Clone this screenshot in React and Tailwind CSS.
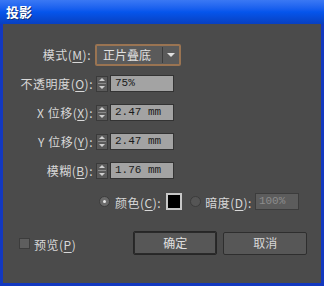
import { useState } from 'react'

const ROWS = [
  { label: '不透明度', key: 'O', value: '75%' },
  { label: 'X 位移', key: 'X', value: '2.47 mm' },
  { label: 'Y 位移', key: 'Y', value: '2.47 mm' },
  { label: '模糊', key: 'B', value: '1.76 mm' },
]

const cjk = { fontFamily: '"Noto Sans CJK SC", "Noto Sans", sans-serif' }

function Label({ text, hotkey, colon = true }) {
  return (
    <span className="whitespace-nowrap text-[12px] tracking-[0.5px] text-[#d8d8d8]" style={cjk}>
      {text}(<span className="underline underline-offset-2">{hotkey}</span>){colon ? ':' : ''}
    </span>
  )
}

function Spinner() {
  return (
    <div className="flex h-[16px] w-[12px] flex-col justify-between border border-[#3a3a3a] bg-[#5a5a5a]">
      <div className="flex h-[7px] items-center justify-center">
        <div className="h-0 w-0 border-x-[3px] border-b-[3px] border-x-transparent border-b-[#cfcfcf]" />
      </div>
      <div className="mx-[1px] h-px bg-[#8a8a8a]" />
      <div className="flex h-[7px] items-center justify-center">
        <div className="h-0 w-0 border-x-[3px] border-t-[3px] border-x-transparent border-t-[#cfcfcf]" />
      </div>
    </div>
  )
}

export default function App() {
  const [preview, setPreview] = useState(false)

  return (
    <div className="flex h-[286px] w-[324px] flex-col bg-[#1238c0]" style={cjk}>
      <div className="flex h-[24px] items-center bg-gradient-to-b from-[#3a78f4] via-[#0555ec] to-[#0840c0] pl-[6px]">
        <span className="text-[13px] font-bold text-white [text-shadow:1px_1px_0_#10307a]">投影</span>
      </div>
      <div className="mx-[3px] mb-[3px] flex flex-1 flex-col bg-[#4b4b4b] pt-[20px]">
        <div className="flex h-[22px] items-center">
          <div className="flex w-[88px] justify-end">
            <Label text="模式" hotkey="M" />
          </div>
          <div className="ml-[4px] flex h-[22px] w-[86px] items-center rounded-[2px] border-2 border-[#9a7452] bg-[#5a5a5a]">
            <span className="flex-1 pl-[6px] text-[12px] text-[#e0e0e0]">正片叠底</span>
            <div className="h-[16px] w-px bg-[#3c3c3c]" />
            <div className="flex w-[16px] justify-center">
              <div className="h-0 w-0 border-x-[4px] border-t-[4px] border-x-transparent border-t-[#e0e0e0]" />
            </div>
          </div>
        </div>

        <div className="mt-[9px] flex flex-col gap-[12px]">
          {ROWS.map((row) => (
            <div key={row.key} className="flex h-[17px] items-center">
              <div className="flex w-[90px] justify-end">
                <Label text={row.label} hotkey={row.key} />
              </div>
              <div className="ml-[3px]">
                <Spinner />
              </div>
              <div className="ml-[2px] flex h-[17px] w-[64px] items-center border border-[#333] bg-[#a3a3a3] pl-[4px] text-[11px] text-[#1a1a1a]" style={{ fontFamily: '"Liberation Mono", monospace' }}>
                {row.value}
              </div>
            </div>
          ))}
        </div>

        <div className="mt-[13px] flex h-[18px] items-center pl-[96px]">
          <div className="flex h-[11px] w-[11px] items-center justify-center rounded-full border border-[#3c3c3c] bg-[#6a6a6a]">
            <div className="h-[3px] w-[3px] rounded-full bg-[#e8e8e8]" />
          </div>
          <span className="ml-[5px]"><Label text="颜色" hotkey="C" /></span>
          <div className="ml-[5px] h-[17px] w-[16px] border-2 border-[#c8c8c8] bg-black" />
          <div className="ml-[8px] h-[11px] w-[11px] rounded-full border border-[#3c3c3c] bg-[#555]" />
          <span className="ml-[4px]"><Label text="暗度" hotkey="D" /></span>
          <div className="ml-[3px] flex h-[17px] w-[44px] items-center border border-[#3c3c3c] bg-[#5c5c5c] pl-[3px] text-[11px] text-[#8c8c8c]" style={{ fontFamily: '"Liberation Mono", monospace' }}>
            100%
          </div>
        </div>

        <div className="mt-[21px] flex h-[24px] items-center pl-[16px]">
          <button type="button" onClick={() => setPreview(!preview)} className="flex items-center">
            <div className="h-[11px] w-[11px] border border-[#3c3c3c] bg-[#5e5e5e]" />
            <span className="ml-[4px]"><Label text="预览" hotkey="P" colon={false} /></span>
          </button>
          <button type="button" className="ml-[57px] h-[24px] w-[84px] rounded-[2px] border border-[#262626] bg-[#575757] text-[12px] text-[#e0e0e0] shadow-[inset_0_0_0_1px_#2a2a2a]">
            确定
          </button>
          <button type="button" className="ml-[6px] h-[23px] w-[84px] rounded-[2px] border border-[#2e2e2e] bg-[#575757] text-[12px] text-[#d8d8d8]">
            取消
          </button>
        </div>
      </div>
    </div>
  )
}
